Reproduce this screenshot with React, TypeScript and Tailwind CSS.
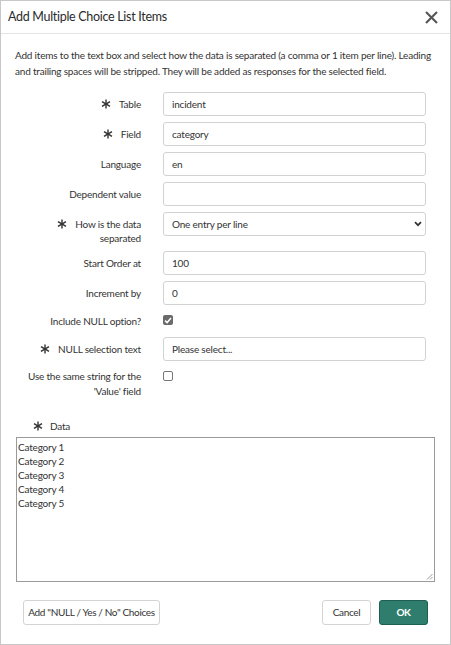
import React from "react";

const Star = () => (
  <svg width="10" height="10" viewBox="0 0 12 12" className="shrink-0">
    <g stroke="#333" strokeWidth="1.7">
      <line x1="6" y1="0.5" x2="6" y2="11.5" />
      <line x1="1.2" y1="3.2" x2="10.8" y2="8.8" />
      <line x1="1.2" y1="8.8" x2="10.8" y2="3.2" />
    </g>
  </svg>
);

const Label = ({ req, lines }: { req?: boolean; lines: string[] }) => (
  <div className="w-[140px] shrink-0 flex justify-end items-start text-right">
    {req && (
      <span className="mr-[8px] mt-[2px]">
        <Star />
      </span>
    )}
    <div className="leading-[14px]">
      {lines.map((l) => (
        <div key={l}>{l}</div>
      ))}
    </div>
  </div>
);

const Row = ({ label, req, value }: { label: string; req?: boolean; value: string }) => (
  <div className="flex items-center h-[24px]">
    <Label req={req} lines={[label]} />
    <div className="ml-[22px] h-[24px] w-[263px] border border-[#d2d2d2] rounded-[3px] flex items-center px-[8px]">
      {value}
    </div>
  </div>
);

export default function App() {
  return (
    <div
      className="w-[451px] h-[645px] bg-white border border-[#c8c8c8] flex flex-col text-[#333] tracking-[-0.2px]"
      style={{ fontFamily: "Lato, 'Open Sans', sans-serif" }}
    >
      <div className="h-[33px] shrink-0 border-b border-[#e4e4e4] flex items-center justify-between pl-[7px] pr-[12px]">
        <span className="text-[12.5px] tracking-[-0.3px] text-[#2b2b2b]">Add Multiple Choice List Items</span>
        <svg width="13" height="13" viewBox="0 0 13 13">
          <path d="M1 1 L12 12 M12 1 L1 12" stroke="#555" strokeWidth="2.1" />
        </svg>
      </div>

      <p className="text-[10px] leading-[16px] px-[14px] pt-[13px]">
        Add items to the text box and select how the data is separated (a comma or 1 item per line). Leading
        <br />
        and trailing spaces will be stripped. They will be added as responses for the selected field.
      </p>

      <div className="text-[10px] flex flex-col gap-[6px] mt-[13px]">
        <Row label="Table" req value="incident" />
        <Row label="Field" req value="category" />
        <Row label="Language" value="en" />
        <Row label="Dependent value" value="" />
        <div className="flex items-start h-[24px]">
          <div className="pt-[5px] flex">
            <Label req lines={["How is the data", "separated"]} />
          </div>
          <div className="ml-[22px] h-[24px] w-[263px] border border-[#d2d2d2] rounded-[3px] flex items-center justify-between pl-[8px] pr-[3px]">
            <span>One entry per line</span>
            <svg width="8" height="6" viewBox="0 0 8 6">
              <path d="M1 1.2 L4 4.2 L7 1.2" stroke="#333" strokeWidth="1.7" fill="none" />
            </svg>
          </div>
        </div>
        <div className="h-[3px]" />
        <Row label="Start Order at" value="100" />
        <Row label="Increment by" value="0" />
        <div className="flex items-start h-[20px] pt-[3px]">
          <Label lines={["Include NULL option?"]} />
          <div className="ml-[22px] mt-[1px] w-[10px] h-[10px] rounded-[2px] bg-[#6a6a6a] flex items-center justify-center">
            <svg width="8" height="7" viewBox="0 0 8 7">
              <path d="M1 3.6 L3.1 5.6 L7 1" stroke="#fff" strokeWidth="1.5" fill="none" />
            </svg>
          </div>
        </div>
        <Row label="NULL selection text" req value="Please select..." />
        <div className="flex items-start">
          <div className="pt-[2px] flex">
            <div className="w-[140px] shrink-0 text-right leading-[15px]">
              <div>Use the same string for the</div>
              <div>'Value' field</div>
            </div>
          </div>
          <div className="ml-[22px] mt-[4px] w-[10px] h-[10px] rounded-[2px] border border-[#777] bg-white" />
        </div>
      </div>

      <div className="flex items-center h-[14px] text-[10px] pl-[32px] mt-[20px]">
        <span className="mr-[7px]">
          <Star />
        </span>
        Data
      </div>
      <div className="mx-[15px] mt-[4px] h-[145px] shrink-0 border border-[#9a9a9a] relative text-[10px] leading-[14px] pl-[1px] pt-[2px]">
        <div>Category 1</div>
        <div>Category 2</div>
        <div>Category 3</div>
        <div>Category 4</div>
        <div>Category 5</div>
        <svg width="7" height="7" viewBox="0 0 7 7" className="absolute right-[1px] bottom-[1px]">
          <path d="M6.5 1 L1 6.5 M6.5 4 L4 6.5" stroke="#999" strokeWidth="1" />
        </svg>
      </div>

      <div className="flex items-center justify-between pl-[22px] pr-[22px] mt-[18px] text-[10px] tracking-[-0.35px]">
        <button className="h-[25px] w-[137px] border border-[#d4d4d4] rounded-[3px] bg-white text-[#333]">
          Add "NULL / Yes / No" Choices
        </button>
        <div className="flex gap-[8px]">
          <button className="h-[25px] w-[49px] border border-[#d4d4d4] rounded-[3px] bg-white text-[#333]">
            Cancel
          </button>
          <button className="h-[25px] w-[49px] border border-[#1f5e52] rounded-[3px] bg-[#2e7d6d] text-white font-bold">
            OK
          </button>
        </div>
      </div>
    </div>
  );
}
